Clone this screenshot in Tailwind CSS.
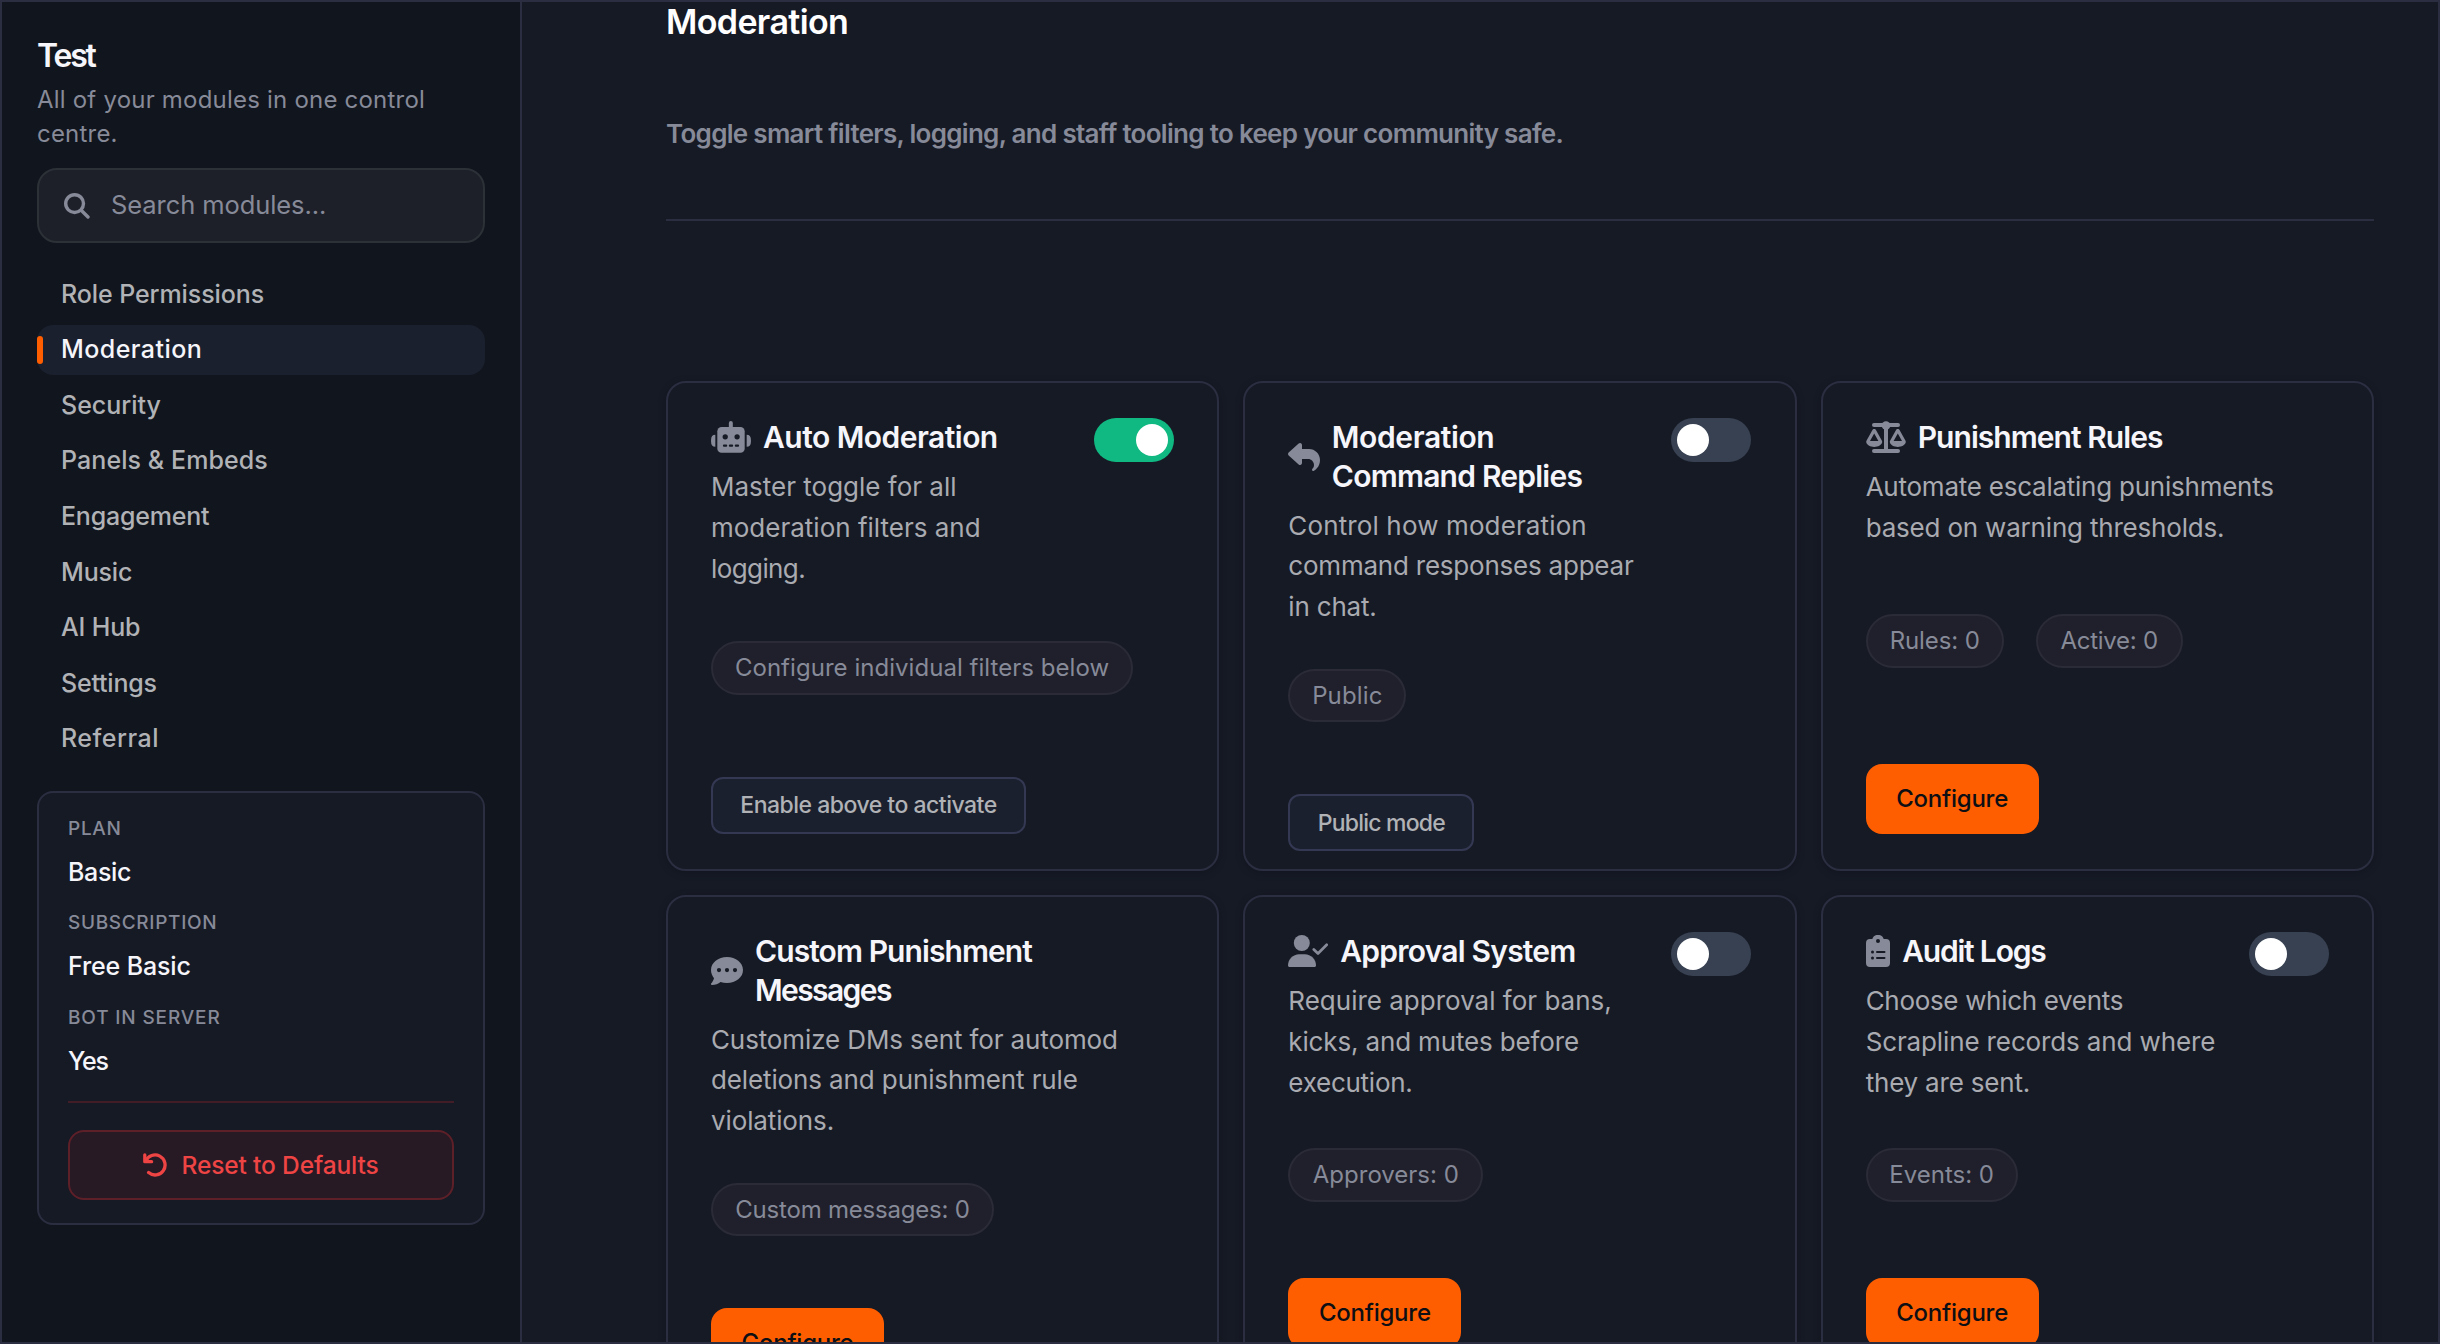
<!DOCTYPE html>
<html lang="en">
<head>
<meta charset="utf-8">
<title>Moderation</title>
<script src="https://cdn.jsdelivr.net/npm/@tailwindcss/browser@4"></script>
</head>
<body class="bg-[#161a25]">
<div class="flex h-[1344px] w-[2440px] overflow-hidden border-2 border-[#2a2e40] bg-[#161a25] font-['Inter',sans-serif] text-[#f5f5fa]">

  <aside class="flex w-[520px] shrink-0 flex-col border-r-2 border-[#2a2e40] bg-[#11151d] px-[35px] pt-[34px]">
    <h1 class="text-[32px] leading-[40px] font-semibold tracking-[-2.2px]">Test</h1>
    <p class="mt-[7px] text-[24px] leading-[34px] tracking-[0.21px] whitespace-nowrap text-[#878a98]">All of your modules in one control<br>centre.</p>

    <div class="mt-[17px] flex h-[75px] shrink-0 items-center rounded-[20px] border-2 border-[#2c3037] bg-[#1d2028] pl-[25px]">
      <svg class="h-[26px] w-[26px] shrink-0 text-[#878a98]" viewBox="0 0 26 26" fill="none" stroke="currentColor" stroke-width="3.4" stroke-linecap="round"><circle cx="10.6" cy="10.6" r="8.9"/><path d="M17.2 17.2 24 24"/></svg>
      <span class="ml-[21px] text-[25.5px] tracking-[-0.08px] text-[#878a98]">Search modules...</span>
    </div>

    <nav class="mt-[26.4px] flex flex-col gap-[5.6px] text-[25px] font-medium text-[#b0b2b6]">
      <a class="flex h-[50px] items-center pl-[24px] tracking-[-0.09px]">Role Permissions</a>
      <a class="relative flex h-[50px] items-center rounded-2xl bg-[#1b202e] pl-[24px] tracking-[0.45px] text-[#f5f5fa]"><span class="absolute top-[11px] left-0 h-[28px] w-[6px] rounded-[3px] bg-[#ff5e00]"></span>Moderation</a>
      <a class="flex h-[50px] items-center pl-[24px] tracking-[-0.02px]">Security</a>
      <a class="flex h-[50px] items-center pl-[24px] tracking-[0.08px]">Panels &amp; Embeds</a>
      <a class="flex h-[50px] items-center pl-[24px] tracking-[-0.21px]">Engagement</a>
      <a class="flex h-[50px] items-center pl-[24px] tracking-[-0.15px]">Music</a>
      <a class="flex h-[50px] items-center pl-[24px] tracking-[-0.17px]">AI Hub</a>
      <a class="flex h-[50px] items-center pl-[24px] tracking-[-0.21px]">Settings</a>
      <a class="flex h-[50px] items-center pl-[24px] tracking-[0.5px]">Referral</a>
    </nav>

    <section class="mt-[26.8px] flex h-[434px] shrink-0 flex-col rounded-2xl border-2 border-[#2a2e40] bg-[#161a25] px-[29px] pt-[21px]">
      <div class="text-[19px] leading-[30px] font-medium tracking-[0.7px] text-[#878a98]">PLAN</div>
      <div class="mt-[10px] text-[25px] leading-[36px] font-medium tracking-[-0.34px]">Basic</div>
      <div class="mt-[18.5px] text-[19px] leading-[30px] font-medium tracking-[0.67px] text-[#878a98]">SUBSCRIPTION</div>
      <div class="mt-[10px] text-[25px] leading-[36px] font-medium tracking-[-0.13px]">Free Basic</div>
      <div class="mt-[18.5px] text-[19px] leading-[30px] font-medium tracking-[0.85px] text-[#878a98]">BOT IN SERVER</div>
      <div class="mt-[10px] text-[25px] leading-[36px] font-medium tracking-[-1.2px]">Yes</div>
      <div class="mt-[22px] h-[2px] bg-[#421c27]"></div>
      <button class="mt-[27px] flex h-[70px] items-center justify-center rounded-2xl border-2 border-[#5d1f28] bg-[#271a25] text-[24.5px] font-medium tracking-[-0.13px] text-[#ef4444]">
        <svg class="mr-[14px] h-[24px] w-[24px]" viewBox="0 0 24 24" fill="none" stroke="currentColor" stroke-width="3.3" stroke-linecap="round" stroke-linejoin="round"><path d="M1.8 1.9v6.8h6.8"/><path d="M2.8 8.2A10 10 0 1 1 5.6 19.6"/></svg>
        Reset to Defaults
      </button>
    </section>
  </aside>

  <main class="flex-1 overflow-hidden pr-[64px] pl-[144px]">
    <h2 class="text-[34px] leading-[40px] font-semibold tracking-[-0.63px] text-white">Moderation</h2>
    <p class="mt-[71.5px] text-[26px] leading-[40px] font-semibold tracking-[-0.7px] text-[#878a98]">Toggle smart filters, logging, and staff tooling to keep your community safe.</p>
    <div class="mt-[65.5px] h-[2px] bg-[#2a2e40]"></div>

    <div class="mt-[160px] grid grid-cols-3 gap-6 whitespace-nowrap">

      <article class="h-[490px] rounded-[20px] border-2 border-[#2a2e40] bg-[#161a25] px-[43px] pt-[35px] shadow-[0_2px_8px_rgba(0,0,0,0.2)]">
        <div class="flex items-start justify-between">
          <div>
            <h3 class="flex items-center text-[30px] leading-[38.6px] font-semibold tracking-[-0.53px]">
              <svg class="mr-[12px] h-[32px] w-[40px] shrink-0" viewBox="0 0 121 97" fill="#878a98"><path d="M13 42v36Q0 78 0 62V58Q0 42 13 42ZM108 42v36q13 0 13-16V58q0-16-13-16Z"/><rect x="54" y="0" width="12" height="26" rx="6"/><rect x="19" y="18" width="83" height="78" rx="13"/><g fill="#161a25"><circle cx="43" cy="48" r="8"/><circle cx="79" cy="48" r="8"/><rect x="36" y="71" width="13" height="7" rx="3"/><rect x="54" y="71" width="13" height="7" rx="3"/><rect x="72" y="71" width="13" height="7" rx="3"/></g></svg>
              Auto Moderation
            </h3>
            <p class="mt-[10.6px] text-[26px] leading-[40.7px] text-[#a9abb1]">Master toggle for all<br>moderation filters and<br><span class="tracking-[-0.6px]">logging.</span></p>
          </div>
          <div class="flex h-[44px] w-[80px] items-center justify-end rounded-full bg-[#10b981] px-[6px]"><span class="h-[32px] w-[32px] rounded-full bg-white"></span></div>
        </div>
        <div class="mt-[52px] flex h-[54px] w-[422px] items-center justify-center rounded-full border-2 border-[#2a2b37] bg-[#1f202b] text-[24px] tracking-[0.04px] text-[#878a98]">Configure individual filters below</div>
        <button class="mt-[81.7px] flex h-[57px] w-[315px] items-center justify-center rounded-xl border-2 border-[#343852] bg-[#1b202e] text-[23px] font-medium tracking-[-0.5px] text-[#b0b2b6]">Enable above to activate</button>
      </article>

      <article class="h-[490px] rounded-[20px] border-2 border-[#2a2e40] bg-[#161a25] pr-[44px] pl-[43px] pt-[35px] shadow-[0_2px_8px_rgba(0,0,0,0.2)]">
        <div class="flex items-start justify-between">
          <div>
            <h3 class="flex items-center text-[30px] leading-[38.6px] font-semibold">
              <svg class="mr-[11.5px] h-[32px] w-[32px] shrink-0" viewBox="0 0 512 512" fill="#878a98"><path d="M205 34.8c11.5 5.1 19 16.6 19 29.2v64H336c97.2 0 176 78.8 176 176c0 113.3-81.5 163.9-100.2 174.1c-2.5 1.4-5.3 1.9-8.1 1.9c-10.9 0-19.7-8.9-19.7-19.7c0-7.5 4.3-14.4 9.8-19.5c9.4-8.8 22.2-26.4 22.2-56.7c0-53-43-96-96-96H224v64c0 12.6-7.4 24.1-19 29.2s-25 3-34.4-5.4l-160-144C3.9 225.7 0 217.1 0 208s3.9-17.7 10.6-23.8l160-144c9.4-8.5 22.9-10.6 34.4-5.4z"/></svg>
              <span><span class="tracking-[-0.38px]">Moderation</span><br><span class="tracking-[-0.77px]">Command Replies</span></span>
            </h3>
            <p class="mt-[10.6px] text-[26px] leading-[40.7px] text-[#a9abb1]"><span class="tracking-[0.13px]">Control how moderation</span><br><span class="tracking-[-0.22px]">command responses appear</span><br><span class="tracking-[-0.19px]">in chat.</span></p>
          </div>
          <div class="flex h-[44px] w-[80px] shrink-0 items-center rounded-full bg-[#374151] px-[6px]"><span class="h-[32px] w-[32px] rounded-full bg-white"></span></div>
        </div>
        <div class="mt-[41.5px] flex h-[53px] w-[118px] items-center justify-center rounded-full border-2 border-[#2a2b37] bg-[#1f202b] text-[24px] tracking-[0.13px] text-[#878a98]">Public</div>
        <button class="mt-[72px] flex h-[57px] w-[186px] items-center justify-center rounded-xl border-2 border-[#343852] bg-[#1b202e] text-[23px] font-medium tracking-[-0.8px] text-[#b0b2b6]">Public mode</button>
      </article>

      <article class="h-[490px] rounded-[20px] border-2 border-[#2a2e40] bg-[#161a25] px-[43px] pt-[35px] shadow-[0_2px_8px_rgba(0,0,0,0.2)]">
        <h3 class="flex items-center text-[30px] leading-[38.6px] font-semibold tracking-[-0.95px]">
          <svg class="mr-[12px] h-[32px] w-[40px] shrink-0" viewBox="0 0 40 32" fill="#878a98"><rect x="6" y="2" width="28" height="4" rx="2"/><circle cx="20" cy="4.5" r="4.3"/><rect x="18" y="5" width="4" height="25"/><rect x="6" y="28" width="28" height="4" rx="2"/><path fill-rule="evenodd" d="M8.2 8c.9 0 1.5.5 1.9 1.2l5.7 10.2c.4.7.5 1.4.3 2.2C15.3 24.3 12 26 8.2 26S1.1 24.3.3 21.6c-.2-.8-.1-1.5.3-2.2L6.3 9.2C6.7 8.500 7.3 8 8.2 8Zm0 4.5L4 20h8.4Z"/><path fill-rule="evenodd" d="M31.8 8c.9 0 1.5.5 1.9 1.2l5.7 10.2c.4.7.5 1.4.3 2.2-.8 2.7-4.1 4.4-7.9 4.4s-7.1-1.7-7.9-4.4c-.2-.8-.1-1.5.3-2.2l5.7-10.2c.4-.7 1-1.2 1.9-1.2Zm0 4.5L27.6 20H36Z"/></svg>
          Punishment Rules
        </h3>
        <p class="mt-[10.6px] text-[26px] leading-[40.7px] text-[#a9abb1]"><span class="tracking-[-0.24px]">Automate escalating punishments</span><br><span class="tracking-[-0.19px]">based on warning thresholds.</span></p>
        <div class="mt-[65.6px] flex gap-[32px] text-[24px] text-[#878a98]">
          <div class="flex h-[54px] w-[138px] items-center justify-center rounded-full border-2 border-[#2a2b37] bg-[#1f202b] tracking-[-0.11px]">Rules: 0</div>
          <div class="flex h-[54px] w-[147px] items-center justify-center rounded-full border-2 border-[#2a2b37] bg-[#1f202b] tracking-[-0.26px]">Active: 0</div>
        </div>
        <button class="mt-[96px] flex h-[70px] w-[173px] items-center justify-center rounded-2xl bg-[#ff5e00] text-[24px] font-medium tracking-[-0.24px] text-[#0d0f14]">Configure</button>
      </article>

      <article class="h-[490px] rounded-[20px] border-2 border-[#2a2e40] bg-[#161a25] px-[43px] pt-[35px] shadow-[0_2px_8px_rgba(0,0,0,0.2)]">
        <h3 class="flex items-center text-[30px] leading-[38.6px] font-semibold">
          <svg class="mr-[12px] h-[32px] w-[32px] shrink-0" viewBox="0 0 32 32" fill="#878a98"><path fill-rule="evenodd" d="M16 2c8.8 0 16 5.6 16 13s-7.2 13-16 13c-2.3 0-4.5-.4-6.5-1.1C7.4 28.6 4.3 30 1 30c-.9 0-1.3-1-.7-1.7 1.3-1.5 2.3-3.4 2.7-5.1C1.1 20.9 0 18 0 15 0 7.6 7.2 2 16 2ZM8 13a2.1 2.1 0 1 0 0 4.2A2.1 2.1 0 0 0 8 13Zm8 0a2.1 2.1 0 1 0 0 4.2A2.1 2.1 0 0 0 16 13Zm8 0a2.1 2.1 0 1 0 0 4.2A2.1 2.1 0 0 0 24 13Z"/></svg>
          <span><span class="tracking-[-0.92px]">Custom Punishment</span><br><span class="tracking-[-1.6px]">Messages</span></span>
        </h3>
        <p class="mt-[10.6px] text-[26px] leading-[40.7px] tracking-[-0.12px] text-[#a9abb1]">Customize DMs sent for automod<br>deletions and punishment rule<br>violations.</p>
        <div class="mt-[41.5px] flex h-[53px] w-[283px] items-center justify-center rounded-full border-2 border-[#2a2b37] bg-[#1f202b] text-[24px] tracking-[-0.21px] text-[#878a98]">Custom messages: 0</div>
        <button class="mt-[72px] flex h-[70px] w-[173px] items-center justify-center rounded-2xl bg-[#ff5e00] text-[24px] font-medium tracking-[-0.24px] text-[#0d0f14]">Configure</button>
      </article>

      <article class="h-[490px] rounded-[20px] border-2 border-[#2a2e40] bg-[#161a25] pr-[44px] pl-[43px] pt-[35px] shadow-[0_2px_8px_rgba(0,0,0,0.2)]">
        <div class="flex items-start justify-between">
          <div>
            <h3 class="flex items-center text-[30px] leading-[38.6px] font-semibold tracking-[-0.78px]">
              <svg class="mr-[12px] h-[32px] w-[40px] shrink-0" viewBox="0 0 40 32" fill="#878a98"><circle cx="13.8" cy="8" r="8"/><path d="M0 30.5C0 24.3 5 19.3 11.2 19.3h5.6C23 19.3 28 24.3 28 30.5c0 .8-.7 1.5-1.5 1.5h-25C.7 32 0 31.3 0 30.5Z"/><path d="m25.8 14.5 4.2 4L38.7 9.7" fill="none" stroke="#878a98" stroke-width="2.7" stroke-linecap="round" stroke-linejoin="round"/></svg>
              Approval System
            </h3>
            <p class="mt-[10.6px] text-[26px] leading-[40.7px] text-[#a9abb1]"><span>Require approval for bans,</span><br><span class="tracking-[-0.15px]">kicks, and mutes before</span><br><span class="tracking-[-0.26px]">execution.</span></p>
          </div>
          <div class="flex h-[44px] w-[80px] shrink-0 items-center rounded-full bg-[#374151] px-[6px]"><span class="h-[32px] w-[32px] rounded-full bg-white"></span></div>
        </div>
        <div class="mt-[45px] flex h-[54px] w-[195px] items-center justify-center rounded-full border-2 border-[#2a2b37] bg-[#1f202b] text-[24px] text-[#878a98]">Approvers: 0</div>
        <button class="mt-[76px] flex h-[70px] w-[173px] items-center justify-center rounded-2xl bg-[#ff5e00] text-[24px] font-medium tracking-[-0.24px] text-[#0d0f14]">Configure</button>
      </article>

      <article class="h-[490px] rounded-[20px] border-2 border-[#2a2e40] bg-[#161a25] px-[43px] pt-[35px] shadow-[0_2px_8px_rgba(0,0,0,0.2)]">
        <div class="flex items-start justify-between">
          <div>
            <h3 class="flex items-center text-[30px] leading-[38.6px] font-semibold tracking-[-1.2px]">
              <svg class="mr-[12.5px] h-[32px] w-[24px] shrink-0" viewBox="0 0 24 32" fill="#878a98"><path d="M4 4h2.3a6 6 0 0 1 11.4 0H20a4 4 0 0 1 4 4v20a4 4 0 0 1-4 4H4a4 4 0 0 1-4-4V8a4 4 0 0 1 4-4Z"/><g fill="#161a25"><circle cx="12" cy="6" r="2"/><circle cx="6.5" cy="17" r="1.5"/><circle cx="6.5" cy="23" r="1.5"/><rect x="10" y="16" width="9.5" height="2" rx="1"/><rect x="10" y="22" width="9.5" height="2" rx="1"/></g></svg>
              Audit Logs
            </h3>
            <p class="mt-[10.6px] text-[26px] leading-[40.7px] text-[#a9abb1]"><span class="tracking-[-0.32px]">Choose which events</span><br><span class="tracking-[-0.13px]">Scrapline records and where</span><br><span class="tracking-[-0.2px]">they are sent.</span></p>
          </div>
          <div class="flex h-[44px] w-[80px] shrink-0 items-center rounded-full bg-[#374151] px-[6px]"><span class="h-[32px] w-[32px] rounded-full bg-white"></span></div>
        </div>
        <div class="mt-[45px] flex h-[54px] w-[152px] items-center justify-center rounded-full border-2 border-[#2a2b37] bg-[#1f202b] text-[24px] text-[#878a98]">Events: 0</div>
        <button class="mt-[76px] flex h-[70px] w-[173px] items-center justify-center rounded-2xl bg-[#ff5e00] text-[24px] font-medium tracking-[-0.24px] text-[#0d0f14]">Configure</button>
      </article>
    </div>
  </main>
</div>
</body>
</html>
